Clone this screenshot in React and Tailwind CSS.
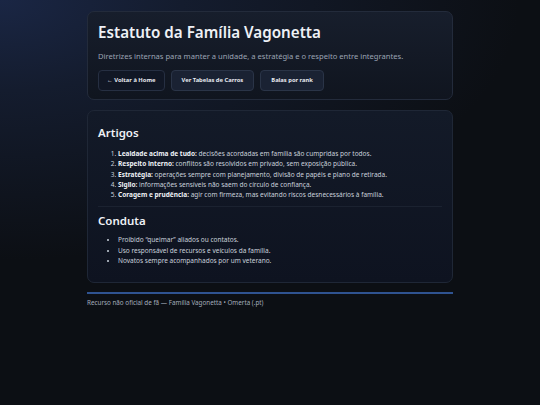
export default function App() {
  const artigos = [
    ["Lealdade acima de tudo:", " decisões acordadas em família são cumpridas por todos."],
    ["Respeito interno:", " conflitos são resolvidos em privado, sem exposição pública."],
    ["Estratégia:", " operações sempre com planejamento, divisão de papéis e plano de retirada."],
    ["Sigilo:", " informações sensíveis não saem do círculo de confiança."],
    ["Coragem e prudência:", " agir com firmeza, mas evitando riscos desnecessários à família."],
  ];
  const conduta = [
    "Proibido \u201cqueimar\u201d aliados ou contatos.",
    "Uso responsável de recursos e veículos da família.",
    "Novatos sempre acompanhados por um veterano.",
  ];
  return (
    <div
      className="min-h-[405px] w-full text-[#e6e9ef] bg-[#0c0f14] bg-[radial-gradient(ellipse_520px_260px_at_0%_0%,#1a2644_0%,#141c2e_35%,#0c0f14_100%)]"
      style={{ fontFamily: '"Noto Sans", "Open Sans", sans-serif' }}
    >
      <div className="mx-auto w-[366px] pt-[11px] flex flex-col">
        <section className="rounded-[7px] border border-[#232b3b] bg-gradient-to-b from-[#171e2c] to-[#10151f] px-[10px] pt-[9px] pb-[8px]">
          <h1 className="text-[15.2px] leading-[22px] font-semibold text-[#eef1f6]">Estatuto da Família Vagonetta</h1>
          <p className="mt-[8px] text-[7.6px] leading-[11px] text-[#9ba4b4]">
            Diretrizes internas para manter a unidade, a estratégia e o respeito entre integrantes.
          </p>
          <div className="mt-[8px] flex gap-[6px]">
            <button className="h-[21px] px-[8px] rounded-[4px] border border-[#262f42] bg-[#111725] text-[5.8px] font-bold text-[#e6e9ef]">
              ← Voltar à Home
            </button>
            <button className="h-[21px] px-[10px] rounded-[4px] border border-[#2a3447] bg-[#1a2233] text-[5.8px] font-bold text-[#e6e9ef]">
              Ver Tabelas de Carros
            </button>
            <button className="h-[21px] px-[10px] rounded-[4px] border border-[#2a3447] bg-[#1a2233] text-[5.8px] font-bold text-[#e6e9ef]">
              Balas por rank
            </button>
          </div>
        </section>

        <section className="mt-[10px] rounded-[7px] border border-[#1f2736] bg-gradient-to-b from-[#131a28] to-[#0e1320] px-[10px] pt-[14px] pb-[16px]">
          <h2 className="text-[11.5px] leading-[16px] font-semibold text-[#eef1f6]">Artigos</h2>
          <ol className="mt-[8px] pl-[20px] list-decimal text-[6.5px] leading-[10.25px] text-[#c9d0db]">
            {artigos.map(([b, t]) => (
              <li key={b}>
                <b className="font-bold text-[#eef1f6]">{b}</b>
                {t}
              </li>
            ))}
          </ol>
          <div className="mt-[6px] border-t border-[#1b2230]" />
          <h2 className="mt-[6px] text-[11.5px] leading-[16px] font-semibold text-[#eef1f6]">Conduta</h2>
          <ul className="mt-[6px] pl-[20px] list-disc text-[6.5px] leading-[10.25px] text-[#c9d0db]">
            {conduta.map((c) => (
              <li key={c}>{c}</li>
            ))}
          </ul>
        </section>

        <footer className="mt-[9px] border-t-[2px] border-[#2f5391] pt-[4px] text-[6.3px] leading-[10px] text-[#a3acbb]">
          Recurso não oficial de fã — Família Vagonetta • Omerta (.pt)
        </footer>
      </div>
    </div>
  );
}
